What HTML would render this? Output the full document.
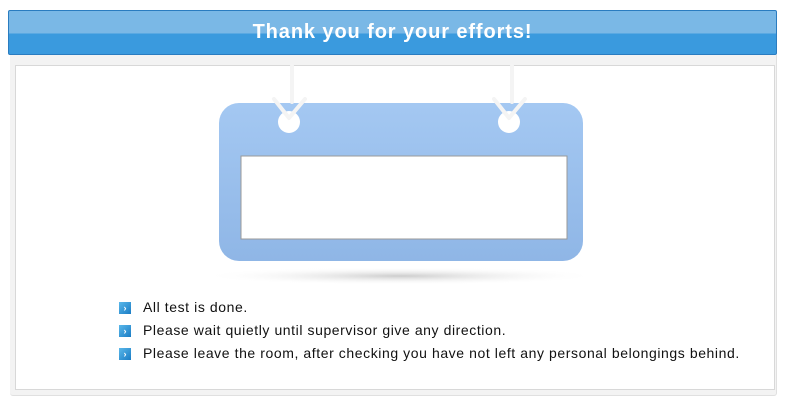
<!DOCTYPE html>
<html><head><style>
body{margin:0;width:790px;height:400px;background:#fff;position:relative;font-family:"Liberation Sans",sans-serif;overflow:hidden}
.hd{position:absolute;left:8px;top:10px;width:767px;height:43px;border:1px solid #2a7cc0;border-radius:2px;background:linear-gradient(#7ab8e6 0,#7ab8e6 52%,#3a9ade 52%);color:#fff;font-weight:bold;font-size:20px;letter-spacing:0.9px;text-align:center;line-height:43px}
.outer{position:absolute;left:10px;top:55px;width:766px;height:340px;background:#f3f3f3;border-radius:0 0 3px 3px;border-right:1px solid #e0e0e0;border-bottom:1px solid #e0e0e0}
.inner{position:absolute;left:15px;top:65px;width:758px;height:323px;background:#fff;border:1px solid #d8d8d8}
.li{position:absolute;left:143px;font-size:14px;color:#111;letter-spacing:0.58px;white-space:nowrap}
.ic{position:absolute;left:119px;width:12px;height:12px;background:linear-gradient(135deg,#5ab8ea,#1a7cc4);color:#fff;font-size:9px;line-height:12px;text-align:center;font-weight:bold}
</style></head><body>
<div class="hd">Thank you for your efforts!</div>
<div class="outer"></div>
<div class="inner"></div>
<svg style="position:absolute;left:0;top:0" width="790" height="400">
<defs>
<radialGradient id="sh" cx="0.5" cy="0.5" r="0.5"><stop offset="0" stop-color="#ccc"/><stop offset="1" stop-color="#fff" stop-opacity="0"/></radialGradient>
<linearGradient id="bl" x1="0" y1="0" x2="0" y2="1"><stop offset="0" stop-color="#a4c8f2"/><stop offset="1" stop-color="#8fb6e6"/></linearGradient>
</defs>
<ellipse cx="400" cy="276" rx="200" ry="9" fill="url(#sh)"/>
<rect x="219" y="103" width="364" height="158" rx="20" fill="url(#bl)"/>
<rect x="241" y="156" width="326" height="83" fill="#fff" stroke="#999" stroke-width="1"/>
<circle cx="289" cy="122" r="11" fill="#fff"/>
<circle cx="509" cy="122" r="11" fill="#fff"/>
<g stroke="#f4f4f4" stroke-width="4" stroke-linecap="round" fill="none">
<path d="M292 66 V102 M274 99 L289 118 M305 99 L289 118"/>
<path d="M512 66 V102 M494 99 L509 118 M525 99 L509 118"/>
</g>
</svg>
<div class="ic" style="top:302px">›</div><div class="li" style="top:299px">All test is done.</div>
<div class="ic" style="top:325px">›</div><div class="li" style="top:322px">Please wait quietly until supervisor give any direction.</div>
<div class="ic" style="top:348px">›</div><div class="li" style="top:345px">Please leave the room, after checking you have not left any personal belongings behind.</div>
</body></html>
